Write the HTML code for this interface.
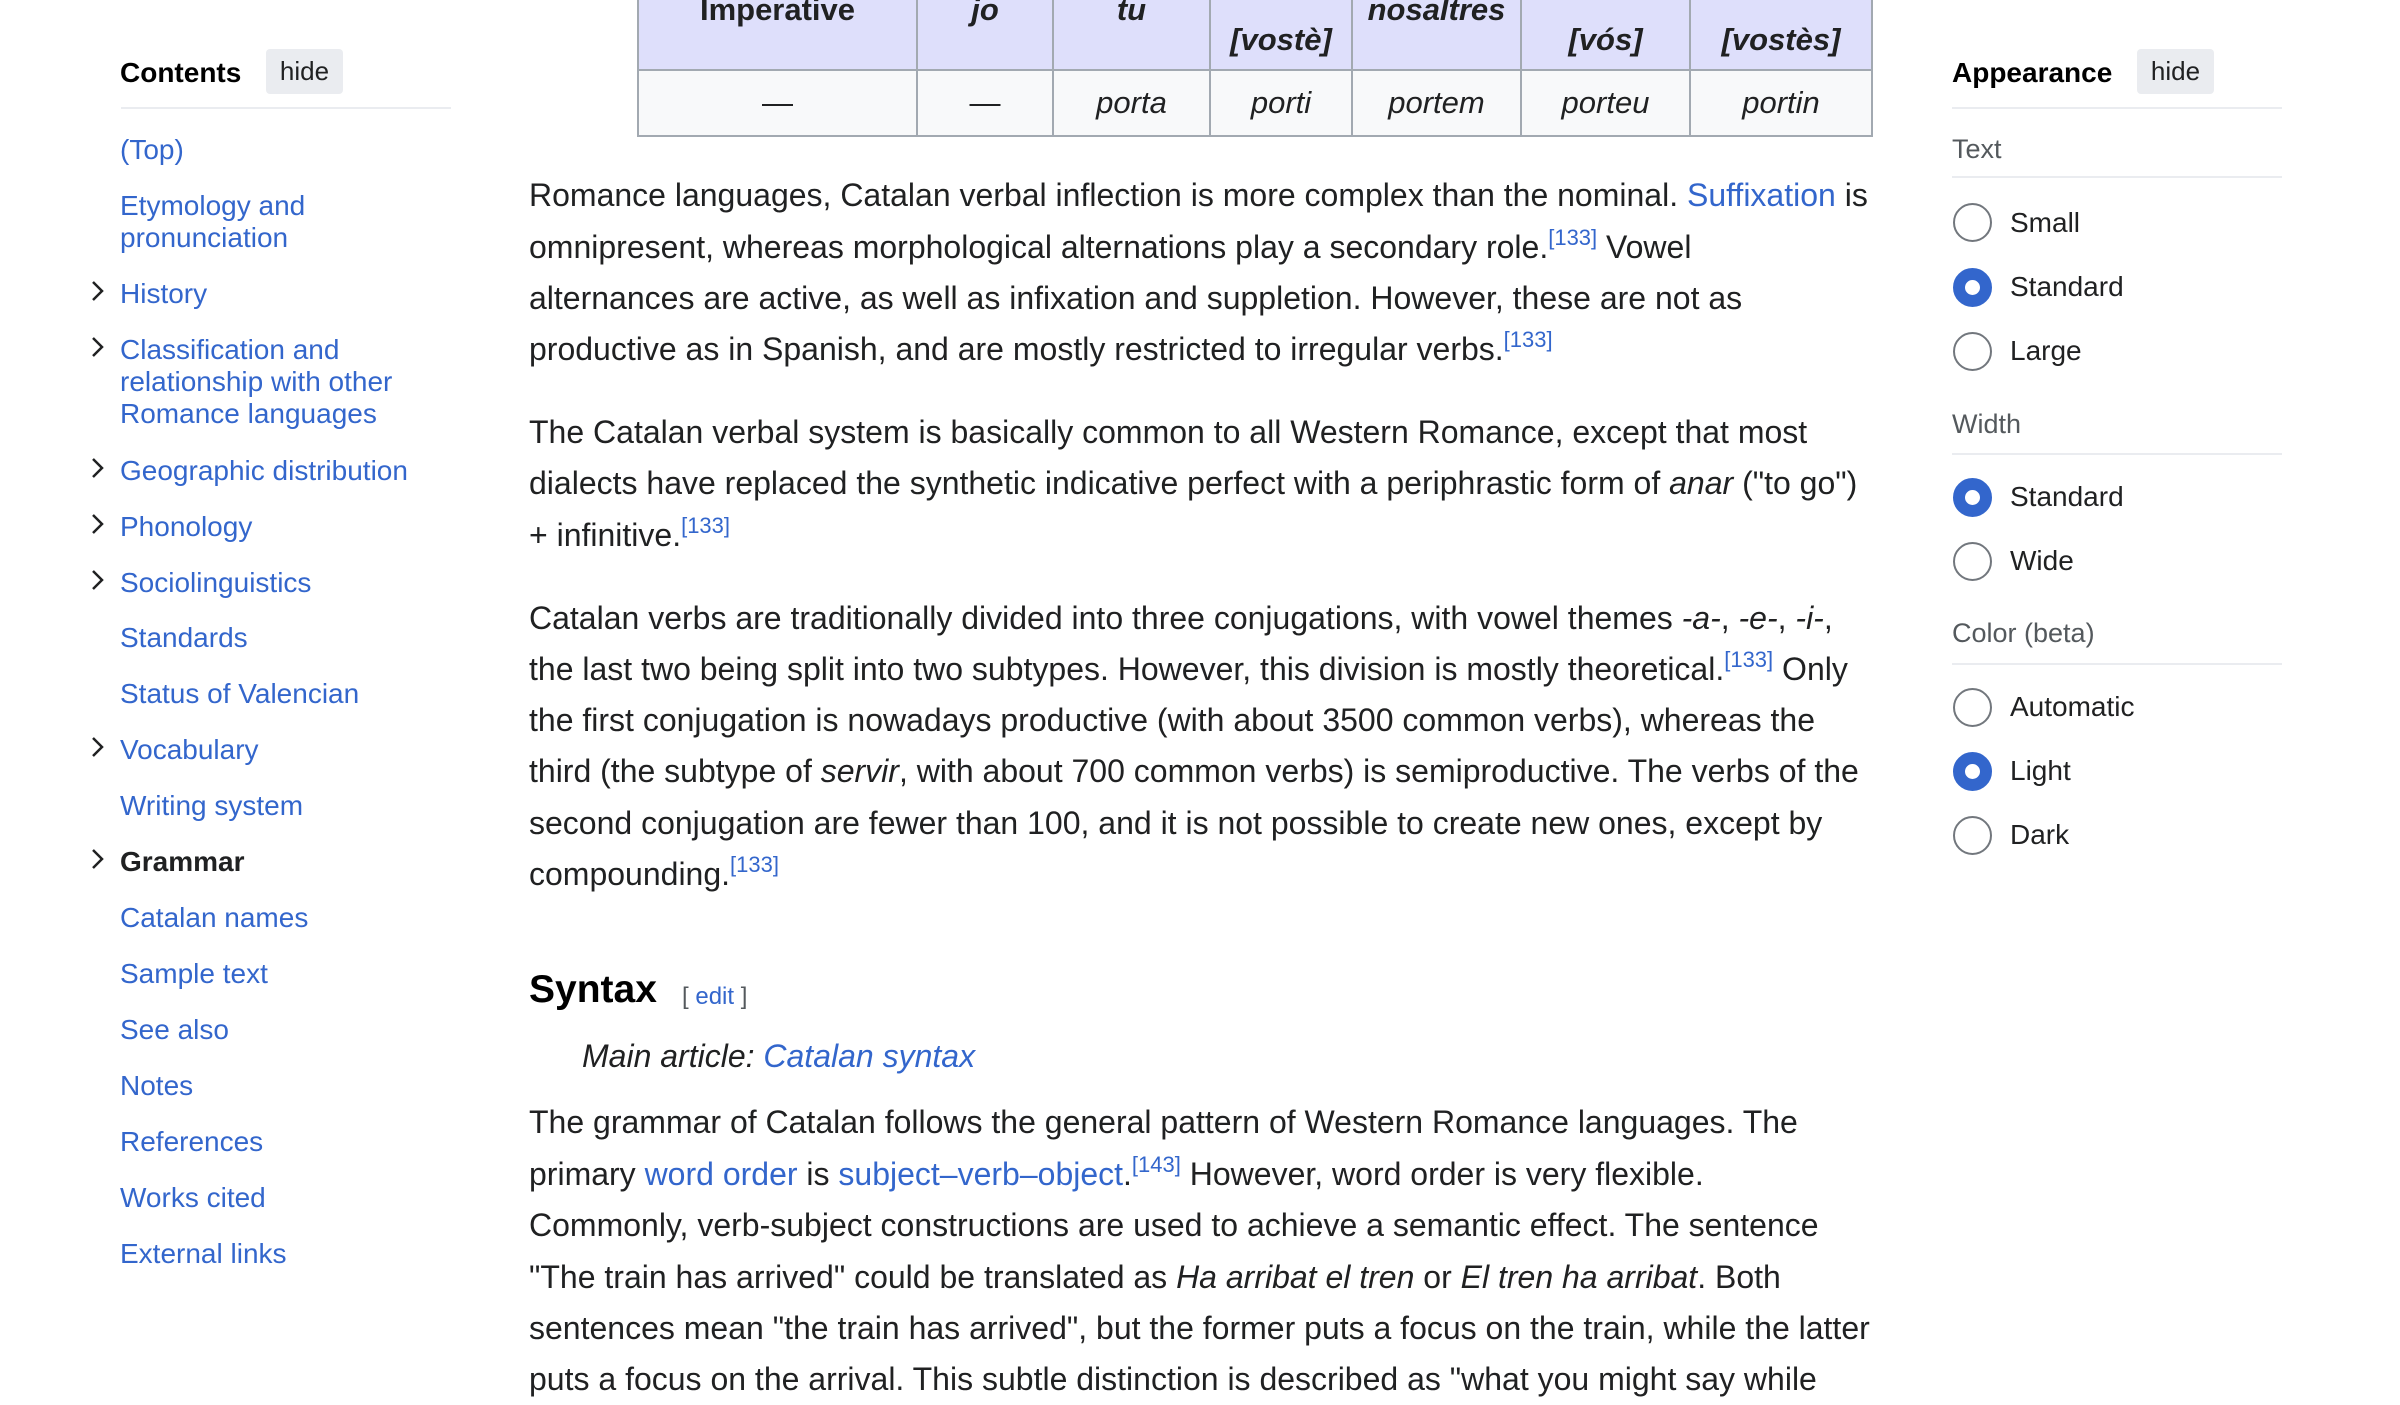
<!DOCTYPE html>
<html><head><meta charset="utf-8"><style>
*{margin:0;padding:0;box-sizing:border-box}
body{width:2400px;height:1398px;overflow:hidden;background:#fff;font-family:"Liberation Sans",Arial,sans-serif;color:#202122;position:relative}
.a{position:absolute;white-space:nowrap}
a{color:#3366cc;text-decoration:none}
.toc{font-size:28px;line-height:32px;color:#3366cc}
.chev{position:absolute;left:87px;width:22px;height:22px}
.hb{position:absolute;background:#eaecf0;border-radius:4px;font-size:26px;color:#202122;text-align:center;line-height:45px}
.hr{position:absolute;height:2px;background:#eaecf0}
.p{font-size:32px;line-height:51px;left:529px}
sup{font-size:22px;color:#3366cc;vertical-align:13px;line-height:0}
.lab{font-size:27px;color:#54595d;left:1952px}
.rad{position:absolute;left:1953px;width:39px;height:39px;border-radius:50%;border:2px solid #72777d;background:#fff}
.rad.on{border:12px solid #3366cc}
.rl{font-size:28px;left:2010px;color:#202122}
table{position:absolute;left:637px;top:-50px;border-collapse:collapse;font-size:31px;table-layout:fixed;width:1234px}
td,th{border:2px solid #a2a9b1;text-align:center}
th{background:#dedffb;height:119px;vertical-align:top;font-weight:bold;padding-top:43px;line-height:30px}
td{background:#f8f9fa;height:66px;font-style:italic}
</style></head><body>

<!-- TOC -->
<div class="a" style="left:120px;top:57px;font-size:28px;font-weight:bold;color:#000">Contents</div>
<div class="hb" style="left:266px;top:49px;width:77px;height:45px">hide</div>
<div class="hr" style="left:121px;top:107px;width:330px"></div>
<div class="toc">
<div class="a" style="left:120px;top:134px">(Top)</div>
<div class="a" style="left:120px;top:190px">Etymology and<br>pronunciation</div>
<div class="a" style="left:120px;top:278px">History</div>
<div class="a" style="left:120px;top:334px">Classification and<br>relationship with other<br>Romance languages</div>
<div class="a" style="left:120px;top:455px">Geographic distribution</div>
<div class="a" style="left:120px;top:511px">Phonology</div>
<div class="a" style="left:120px;top:567px">Sociolinguistics</div>
<div class="a" style="left:120px;top:622px">Standards</div>
<div class="a" style="left:120px;top:678px">Status of Valencian</div>
<div class="a" style="left:120px;top:734px">Vocabulary</div>
<div class="a" style="left:120px;top:790px">Writing system</div>
<div class="a" style="left:120px;top:846px;color:#202122;font-weight:bold">Grammar</div>
<div class="a" style="left:120px;top:902px">Catalan names</div>
<div class="a" style="left:120px;top:958px">Sample text</div>
<div class="a" style="left:120px;top:1014px">See also</div>
<div class="a" style="left:120px;top:1070px">Notes</div>
<div class="a" style="left:120px;top:1126px">References</div>
<div class="a" style="left:120px;top:1182px">Works cited</div>
<div class="a" style="left:120px;top:1238px">External links</div>
</div>
<svg class="chev" style="top:280px" viewBox="0 0 22 22"><path d="M6 2l9 9-9 9" fill="none" stroke="#202122" stroke-width="2.5"/></svg>
<svg class="chev" style="top:336px" viewBox="0 0 22 22"><path d="M6 2l9 9-9 9" fill="none" stroke="#202122" stroke-width="2.5"/></svg>
<svg class="chev" style="top:457px" viewBox="0 0 22 22"><path d="M6 2l9 9-9 9" fill="none" stroke="#202122" stroke-width="2.5"/></svg>
<svg class="chev" style="top:513px" viewBox="0 0 22 22"><path d="M6 2l9 9-9 9" fill="none" stroke="#202122" stroke-width="2.5"/></svg>
<svg class="chev" style="top:569px" viewBox="0 0 22 22"><path d="M6 2l9 9-9 9" fill="none" stroke="#202122" stroke-width="2.5"/></svg>
<svg class="chev" style="top:736px" viewBox="0 0 22 22"><path d="M6 2l9 9-9 9" fill="none" stroke="#202122" stroke-width="2.5"/></svg>
<svg class="chev" style="top:848px" viewBox="0 0 22 22"><path d="M6 2l9 9-9 9" fill="none" stroke="#202122" stroke-width="2.5"/></svg>

<!-- table -->
<table>
<colgroup><col style="width:279px"><col style="width:136px"><col style="width:157px"><col style="width:142px"><col style="width:169px"><col style="width:169px"><col style="width:182px"></colgroup>
<tr><th>Imperative</th><th><i>jo</i></th><th><i>tu</i></th><th><br><i>[vostè]</i></th><th><i>nosaltres</i></th><th><br><i>[vós]</i></th><th><br><i>[vostès]</i></th></tr>
<tr><td style="font-style:normal">—</td><td style="font-style:normal">—</td><td>porta</td><td>porti</td><td>portem</td><td>porteu</td><td>portin</td></tr>
</table>

<!-- paragraphs -->
<div class="a p" style="top:170px">Romance languages, Catalan verbal inflection is more complex than the nominal. <a>Suffixation</a> is</div>
<div class="a p" style="top:222px">omnipresent, whereas morphological alternations play a secondary role.<sup>[133]</sup> Vowel</div>
<div class="a p" style="top:273px">alternances are active, as well as infixation and suppletion. However, these are not as</div>
<div class="a p" style="top:324px">productive as in Spanish, and are mostly restricted to irregular verbs.<sup>[133]</sup></div>

<div class="a p" style="top:407px">The Catalan verbal system is basically common to all Western Romance, except that most</div>
<div class="a p" style="top:458px">dialects have replaced the synthetic indicative perfect with a periphrastic form of <i>anar</i> ("to go")</div>
<div class="a p" style="top:510px">+ infinitive.<sup>[133]</sup></div>

<div class="a p" style="top:593px">Catalan verbs are traditionally divided into three conjugations, with vowel themes <i>-a-</i>, <i>-e-</i>, <i>-i-</i>,</div>
<div class="a p" style="top:644px">the last two being split into two subtypes. However, this division is mostly theoretical.<sup>[133]</sup> Only</div>
<div class="a p" style="top:695px">the first conjugation is nowadays productive (with about 3500 common verbs), whereas the</div>
<div class="a p" style="top:746px">third (the subtype of <i>servir</i>, with about 700 common verbs) is semiproductive. The verbs of the</div>
<div class="a p" style="top:798px">second conjugation are fewer than 100, and it is not possible to create new ones, except by</div>
<div class="a p" style="top:849px">compounding.<sup>[133]</sup></div>

<div class="a" style="left:529px;top:968px;font-size:39px;font-weight:bold;color:#000">Syntax</div>
<div class="a" style="left:682px;top:983px;font-size:24px;color:#54595d">[ <a>edit</a> ]</div>
<div class="a p" style="left:582px;top:1031px;font-style:italic">Main article: <a>Catalan syntax</a></div>

<div class="a p" style="top:1097px">The grammar of Catalan follows the general pattern of Western Romance languages. The</div>
<div class="a p" style="top:1149px">primary <a>word order</a> is <a>subject–verb–object</a>.<sup>[143]</sup> However, word order is very flexible.</div>
<div class="a p" style="top:1200px">Commonly, verb-subject constructions are used to achieve a semantic effect. The sentence</div>
<div class="a p" style="top:1252px">"The train has arrived" could be translated as <i>Ha arribat el tren</i> or <i>El tren ha arribat</i>. Both</div>
<div class="a p" style="top:1303px">sentences mean "the train has arrived", but the former puts a focus on the train, while the latter</div>
<div class="a p" style="top:1354px">puts a focus on the arrival. This subtle distinction is described as "what you might say while</div>

<!-- Appearance -->
<div class="a" style="left:1952px;top:57px;font-size:28px;font-weight:bold;color:#000">Appearance</div>
<div class="hb" style="left:2137px;top:49px;width:77px;height:45px">hide</div>
<div class="hr" style="left:1952px;top:107px;width:330px"></div>
<div class="a lab" style="top:134px">Text</div>
<div class="hr" style="left:1952px;top:176px;width:330px"></div>
<div class="rad" style="top:203px"></div><div class="a rl" style="top:207px">Small</div>
<div class="rad on" style="top:268px"></div><div class="a rl" style="top:271px">Standard</div>
<div class="rad" style="top:332px"></div><div class="a rl" style="top:335px">Large</div>
<div class="a lab" style="top:409px">Width</div>
<div class="hr" style="left:1952px;top:453px;width:330px"></div>
<div class="rad on" style="top:478px"></div><div class="a rl" style="top:481px">Standard</div>
<div class="rad" style="top:542px"></div><div class="a rl" style="top:545px">Wide</div>
<div class="a lab" style="top:618px">Color (beta)</div>
<div class="hr" style="left:1952px;top:663px;width:330px"></div>
<div class="rad" style="top:688px"></div><div class="a rl" style="top:691px">Automatic</div>
<div class="rad on" style="top:752px"></div><div class="a rl" style="top:755px">Light</div>
<div class="rad" style="top:816px"></div><div class="a rl" style="top:819px">Dark</div>
</body></html>
